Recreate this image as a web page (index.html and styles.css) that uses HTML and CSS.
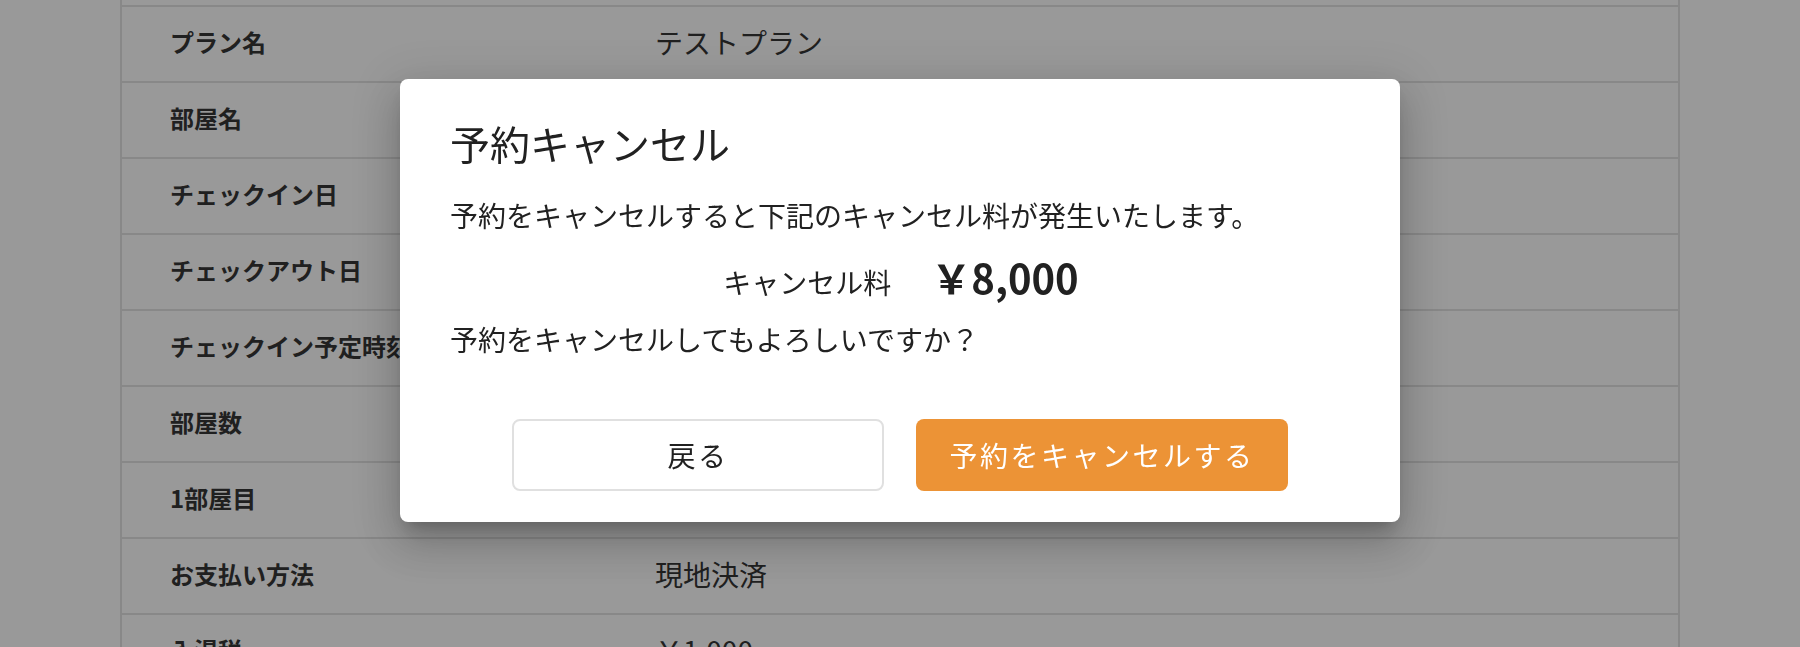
FILE: index.html
```html
<!DOCTYPE html>
<html lang="ja">
<head>
<meta charset="utf-8">
<title>予約キャンセル</title>
<link rel="stylesheet" href="styles.css">
</head>
<body>
<div class="page">
  <div class="table">
    <div class="row row-top"></div>
    <div class="row"><div class="label">プラン名</div><div class="value">テストプラン</div></div>
    <div class="row"><div class="label">部屋名</div><div class="value"></div></div>
    <div class="row"><div class="label">チェックイン日</div><div class="value"></div></div>
    <div class="row"><div class="label">チェックアウト日</div><div class="value"></div></div>
    <div class="row"><div class="label">チェックイン予定時刻</div><div class="value"></div></div>
    <div class="row"><div class="label">部屋数</div><div class="value"></div></div>
    <div class="row"><div class="label">1部屋目</div><div class="value"></div></div>
    <div class="row"><div class="label">お支払い方法</div><div class="value">現地決済</div></div>
    <div class="row"><div class="label">入湯税</div><div class="value">￥1,000</div></div>
  </div>
</div>

<div class="overlay">
  <div class="dialog">
    <div class="dialog-title">予約キャンセル</div>
    <div class="dialog-text">
      <div class="line">予約をキャンセルすると下記のキャンセル料が発生いたします。</div>
      <div class="line line-fee"><span class="fee-label">キャンセル料</span><span class="fee-amount">￥8,000</span></div>
      <div class="line">予約をキャンセルしてもよろしいですか？</div>
    </div>
    <div class="dialog-actions">
      <button class="btn btn-back">戻る</button>
      <button class="btn btn-cancel">予約をキャンセルする</button>
    </div>
  </div>
</div>
</body>
</html>
```

FILE: styles.css
```css
html, body {
  margin: 0;
  padding: 0;
  background: #ffffff;
  font-family: "Noto Sans CJK JP", "Noto Sans", sans-serif;
  color: #212121;
}

.page {
  height: 647px;
  overflow: hidden;
}

.table {
  width: 1560px;
  margin: 0 auto;
  border-left: 2px solid #e0e0e0;
  border-right: 2px solid #e0e0e0;
  box-sizing: border-box;
}

.row {
  display: grid;
  grid-template-columns: 533px 1fr;
  align-items: center;
  height: 76px;
  box-sizing: border-box;
  padding-bottom: 5px;
  border-bottom: 2px solid #e0e0e0;
}

.row-top {
  height: 7px;
  padding-bottom: 0;
}

.label {
  padding-left: 48px;
  font-size: 24px;
  font-weight: 700;
  color: #212121;
}

.value {
  font-size: 28px;
  color: #212121;
}

.overlay {
  position: fixed;
  inset: 0;
  background: rgba(33, 33, 33, 0.46);
  display: flex;
  justify-content: center;
  align-items: flex-start;
  padding-top: 79px;
}

.dialog {
  width: 1000px;
  box-sizing: border-box;
  background: #ffffff;
  border-radius: 8px;
  padding: 32px 48px 31px;
  box-shadow:
    0 11px 15px -7px rgba(0, 0, 0, 0.2),
    0 24px 38px 3px rgba(0, 0, 0, 0.14),
    0 9px 46px 8px rgba(0, 0, 0, 0.12);
}

.dialog-title {
  font-size: 40px;
  line-height: 64px;
  font-weight: 400;
  color: #212121;
  padding-left: 2px;
}

.dialog-text {
  margin-top: 9px;
  font-size: 28px;
  color: #212121;
}

.line {
  line-height: 62px;
  height: 62px;
  white-space: nowrap;
  padding-left: 2px;
}

.line-fee {
  text-align: center;
}

.fee-amount {
  font-size: 40px;
  font-weight: 700;
  margin-left: 40px;
}

.dialog-actions {
  margin-top: 49px;
  display: flex;
  justify-content: center;
  gap: 32px;
}

.btn {
  width: 372px;
  height: 72px;
  border-radius: 8px;
  font-family: "Noto Sans CJK JP", "Noto Sans", sans-serif;
  font-size: 28px;
  letter-spacing: 2.5px;
  cursor: pointer;
  padding: 0;
}

.btn-back {
  background: #ffffff;
  border: 2px solid #e0e0e0;
  color: #212121;
}

.btn-cancel {
  background: #ec9336;
  border: none;
  color: #ffffff;
}
```
